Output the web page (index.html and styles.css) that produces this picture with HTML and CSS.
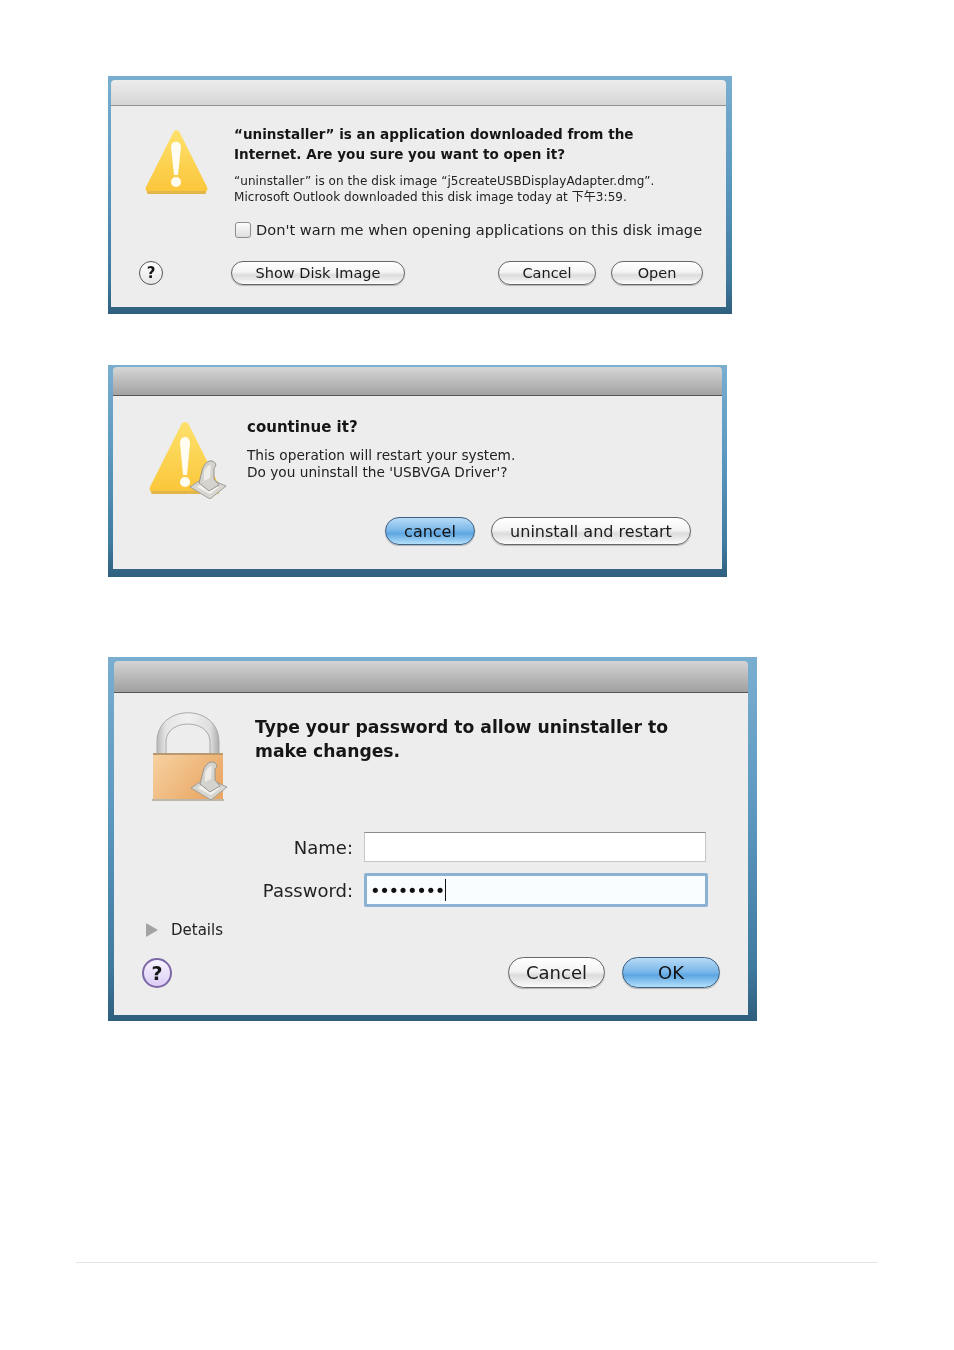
FILE: index.html
```html
<!DOCTYPE html>
<html lang="en">
<head>
    <meta charset="UTF-8">
    <title>Uninstaller dialogs</title>
    <link rel="stylesheet" href="styles.css">
</head>
<body>
<svg class="defs" width="0" height="0">
    <defs>
        <linearGradient id="warnFill" x1="0" y1="0" x2="0" y2="1">
            <stop offset="0" stop-color="#fde16c"/>
            <stop offset="1" stop-color="#fbc63a"/>
        </linearGradient>
        <linearGradient id="lockFill" x1="0" y1="0" x2="1" y2="0.6">
            <stop offset="0" stop-color="#f6d2a2"/>
            <stop offset="1" stop-color="#eaa866"/>
        </linearGradient>
        <linearGradient id="shackleFill" x1="0" y1="0" x2="1" y2="0">
            <stop offset="0" stop-color="#b9b9b9"/>
            <stop offset="0.14" stop-color="#e4e4e4"/>
            <stop offset="0.5" stop-color="#f0f0f0"/>
            <stop offset="0.86" stop-color="#dedede"/>
            <stop offset="1" stop-color="#adadad"/>
        </linearGradient>
        <g id="installer">
            <path d="M1 28 L16 18 L37 27 L21 40 Z" fill="#d8d6d0" stroke="#a09e98" stroke-width="1"/>
            <path d="M8 28 L16 22 L30 28 L21 35 Z" fill="#f3f2ee"/>
            <path d="M10 24 L13 12 C14 6 19 1 23 2 C27 3 28 7 25 9 L25 20 L30 26 L20 32 Z" fill="#d5d3ce" stroke="#97958f" stroke-width="1"/>
            <path d="M15 14 C16 9 19 6 22 6 L21 19 L15 22 Z" fill="#eeece8"/>
        </g>
    </defs>
</svg>

<main class="page">
    <section class="frame frame-a">
        <div class="titlebar titlebar-light"></div>
        <div class="body body-a">
            <div class="top">
                <svg class="warn warn-a" viewBox="0 0 65 67">
                    <path d="M32 2 C34 2 35 3 36 5 L63 59 C64 62 63 64 60 64 L5 64 C2 64 1 62 2 59 L29 5 C30 3 31 2 32 2 Z" fill="url(#warnFill)"/>
                    <rect x="3" y="63" width="59" height="3" rx="1.5" fill="#e3b64a"/>
                    <path d="M27 19 C27 12 37 12 37 19 L34 47 L30 47 Z" fill="#fffdf2"/>
                    <circle cx="32" cy="54" r="5" fill="#fffdf2"/>
                </svg>
                <div class="copy">
                    <h2 class="heading-a">“uninstaller” is an application downloaded from the Internet. Are you sure you want to open it?</h2>
                    <p class="note">“uninstaller” is on the disk image “j5createUSBDisplayAdapter.dmg”.<br>Microsoft Outlook downloaded this disk image today at 下午3:59.</p>
                    <label class="check"><span class="box"></span>Don't warn me when opening applications on this disk image</label>
                </div>
            </div>
            <div class="actions actions-a">
                <span class="help">?</span>
                <span class="btn btn-disk">Show Disk Image</span>
                <span class="btn btn-cancel-a">Cancel</span>
                <span class="btn btn-open">Open</span>
            </div>
        </div>
    </section>

    <section class="frame frame-b">
        <div class="titlebar titlebar-dark"></div>
        <div class="body body-b">
            <div class="top">
                <svg class="warn warn-b" viewBox="0 0 78 78">
                    <path d="M36 1 C38 1 39 2 40 4 L71 66 C72 69 71 71 68 71 L4 71 C1 71 0 69 1 66 L32 4 C33 2 34 1 36 1 Z" fill="url(#warnFill)"/>
                    <rect x="2" y="70" width="68" height="3" rx="1.5" fill="#e3b64a"/>
                    <path d="M31 22 C31 14 41 14 41 22 L38 54 L34 54 Z" fill="#fffdf2"/>
                    <circle cx="36" cy="61" r="5" fill="#fffdf2"/>
                    <use href="#installer" x="40" y="38"/>
                </svg>
                <div class="copy">
                    <h2 class="heading-b">countinue it?</h2>
                    <p class="note-b">This operation will restart your system.<br>Do you uninstall the 'USBVGA Driver'?</p>
                </div>
            </div>
            <div class="actions actions-b">
                <span class="btn btn-blue btn-cancel-b">cancel</span>
                <span class="btn btn-restart">uninstall and restart</span>
            </div>
        </div>
    </section>

    <section class="frame frame-c">
        <div class="titlebar titlebar-tall"></div>
        <div class="body body-c">
            <div class="top">
                <svg class="lock" viewBox="0 0 80 92">
                    <path d="M7 44 L7 30 C7 -9 69 -9 69 30 L69 44 L60 44 L60 30 C60 6 16 6 16 30 L16 44 Z" fill="url(#shackleFill)" stroke="#a9a9a9" stroke-width="1"/>
                    <rect x="3" y="41" width="70" height="47" fill="url(#lockFill)"/>
                    <rect x="3" y="41" width="70" height="2" fill="#b99a70"/>
                    <rect x="2" y="87" width="72" height="2" fill="#bdb6aa"/>
                    <use href="#installer" x="40" y="48"/>
                </svg>
                <h2 class="heading-c">Type your password to allow uninstaller to make changes.</h2>
            </div>
            <div class="form">
                <span class="label">Name:</span>
                <span class="field"></span>
                <span class="label">Password:</span>
                <span class="field field-focus"><span class="dots">••••••••</span><span class="caret"></span></span>
            </div>
            <div class="details"><span class="arrow"></span>Details</div>
            <div class="actions actions-c">
                <span class="help help-purple">?</span>
                <span class="btn btn-cancel-c">Cancel</span>
                <span class="btn btn-blue btn-ok">OK</span>
            </div>
        </div>
    </section>
</main>

<hr class="rule">
</body>
</html>
```

FILE: styles.css
```css
body {
    margin: 0;
    background: #fff;
    font-family: "DejaVu Sans", "Noto Sans CJK SC", sans-serif;
    color: #161616;
}

h2, p {
    margin: 0;
}

.defs {
    position: absolute;
}

.page {
    padding: 76px 0 0 108px;
    filter: blur(0.35px);
}

/* blue desktop showing round each window */
.frame {
    box-sizing: border-box;
    background: linear-gradient(180deg, #79aed0 0%, #5a97bf 45%, #3f7a9f 85%, #2f5f7e 100%);
}

.frame-a {
    width: 624px;
    height: 238px;
    padding: 4px 6px 7px 3px;
}

.frame-b {
    width: 619px;
    height: 212px;
    margin-top: 51px;
    padding: 2px 5px 8px 5px;
}

.frame-c {
    width: 649px;
    height: 364px;
    margin-top: 80px;
    padding: 4px 9px 6px 6px;
}

.titlebar {
    box-sizing: border-box;
    border-radius: 4px 4px 0 0;
    border-bottom: 1px solid #7d7d7d;
}

.titlebar-light {
    height: 26px;
    background: linear-gradient(180deg, #ececec, #d6d6d6);
    border-bottom-color: #929292;
}

.titlebar-dark {
    height: 29px;
    background: linear-gradient(180deg, #d6d6d6, #a2a2a2);
    border-bottom-color: #555;
}

.titlebar-tall {
    height: 32px;
    background: linear-gradient(180deg, #d4d4d4, #a0a0a0);
    border-bottom-color: #555;
}

.body {
    box-sizing: border-box;
    background: #ededed;
}

.body-a {
    height: 201px;
    padding: 18px 23px 0 33px;
}

.body-b {
    height: 173px;
    padding: 21px 31px 0 36px;
}

.body-c {
    height: 322px;
    padding: 19px 28px 0 36px;
}

.top {
    display: flex;
}

.warn, .lock {
    flex: none;
}

.warn-a {
    width: 65px;
    height: 67px;
    margin: 4px 25px 0 0;
}

.warn-b {
    width: 78px;
    height: 78px;
    margin: 4px 20px 0 0;
}

.lock {
    width: 80px;
    height: 92px;
    margin: 0 25px 0 0;
}

.heading-a {
    width: 420px;
    font-size: 13.55px;
    line-height: 20px;
    font-weight: 700;
}

.note {
    margin-top: 9px;
    font-size: 12px;
    letter-spacing: 0.06px;
    line-height: 16px;
    color: #222;
    white-space: nowrap;
}

.check {
    display: flex;
    align-items: center;
    margin-top: 16px;
    font-size: 14.6px;
    line-height: 18px;
    white-space: nowrap;
    color: #222;
}

.box {
    box-sizing: border-box;
    width: 16px;
    height: 16px;
    margin: 0 5px 0 1px;
    border: 1px solid #8e8e8e;
    border-radius: 3px;
    background: linear-gradient(180deg, #fdfdfd, #dedede);
}

.heading-b {
    font-size: 15px;
    line-height: 20px;
    font-weight: 700;
}

.note-b {
    margin-top: 10px;
    font-size: 13.7px;
    line-height: 17px;
    color: #222;
    white-space: nowrap;
}

.heading-c {
    width: 440px;
    margin-top: 3px;
    font-size: 17.2px;
    line-height: 24px;
    font-weight: 700;
}

.actions {
    display: flex;
    align-items: center;
}

.actions-a {
    margin-top: 22px;
    margin-left: -5px;
}

.actions-b {
    justify-content: flex-end;
    margin-top: 18px;
}

.actions-c {
    margin-top: 17px;
    margin-left: -8px;
}

.btn {
    box-sizing: border-box;
    display: flex;
    align-items: center;
    justify-content: center;
    border: 1px solid #666;
    border-radius: 16px;
    background: linear-gradient(180deg, #fff 0%, #f4f4f4 45%, #dcdcdc 60%, #fbfbfb 100%);
    box-shadow: 0 1px 1px rgba(0, 0, 0, 0.25);
    color: #1a1a1a;
    white-space: nowrap;
}

.btn-blue {
    border-color: #3c5f82;
    background: linear-gradient(180deg, #b9dbf6 0%, #7db9ea 45%, #5ea6e2 60%, #b4e0fb 100%);
    color: #111;
}

.btn-disk {
    width: 174px;
    height: 24px;
    margin-left: 68px;
    font-size: 14.5px;
}

.btn-cancel-a {
    width: 98px;
    height: 24px;
    margin-left: auto;
    font-size: 14.5px;
}

.btn-open {
    width: 92px;
    height: 24px;
    margin-left: 15px;
    font-size: 14.5px;
}

.btn-cancel-b {
    width: 90px;
    height: 28px;
    font-size: 16px;
}

.btn-restart {
    width: 200px;
    height: 28px;
    margin-left: 16px;
    font-size: 16px;
}

.btn-cancel-c {
    width: 97px;
    height: 31px;
    margin-left: auto;
    font-size: 18px;
}

.btn-ok {
    width: 98px;
    height: 31px;
    margin-left: 17px;
    font-size: 18px;
}

.help {
    box-sizing: border-box;
    flex: none;
    display: flex;
    align-items: center;
    justify-content: center;
    width: 24px;
    height: 24px;
    border: 1px solid #555;
    border-radius: 50%;
    background: linear-gradient(180deg, #fff, #e6e6e6);
    font-size: 15px;
    font-weight: 700;
}

.help-purple {
    width: 30px;
    height: 30px;
    border: 2px solid #7d66a6;
    background: linear-gradient(180deg, #f8f4ff, #dccdf5);
    font-size: 19px;
}

.form {
    display: grid;
    grid-template-columns: 203px 344px;
    column-gap: 11px;
    row-gap: 11px;
    align-items: center;
    margin-top: 28px;
    font-size: 18px;
    color: #222;
}

.label {
    text-align: right;
}

.field {
    box-sizing: border-box;
    display: flex;
    align-items: center;
    width: 342px;
    height: 30px;
    background: #fff;
    border: 1px solid #c6c6c6;
    border-top-color: #8b8b8b;
}

.field-focus {
    width: 344px;
    height: 34px;
    padding-left: 3px;
    background: #f9fdff;
    border: 3px solid #8bb1d3;
    border-radius: 2px;
}

.dots {
    font-size: 18px;
    letter-spacing: -1.35px;
    color: #111;
}

.caret {
    width: 1px;
    height: 22px;
    margin-left: 1px;
    background: #111;
}

.details {
    display: flex;
    align-items: center;
    margin-top: 13px;
    margin-left: -4px;
    font-size: 15px;
    color: #222;
    line-height: 20px;
}

.arrow {
    width: 0;
    height: 0;
    margin-right: 13px;
    border-left: 12px solid #a3a3a3;
    border-top: 7px solid transparent;
    border-bottom: 7px solid transparent;
}

.rule {
    height: 1px;
    margin: 241px 76px 0;
    border: 0;
    background: #e4e4e4;
}
```
